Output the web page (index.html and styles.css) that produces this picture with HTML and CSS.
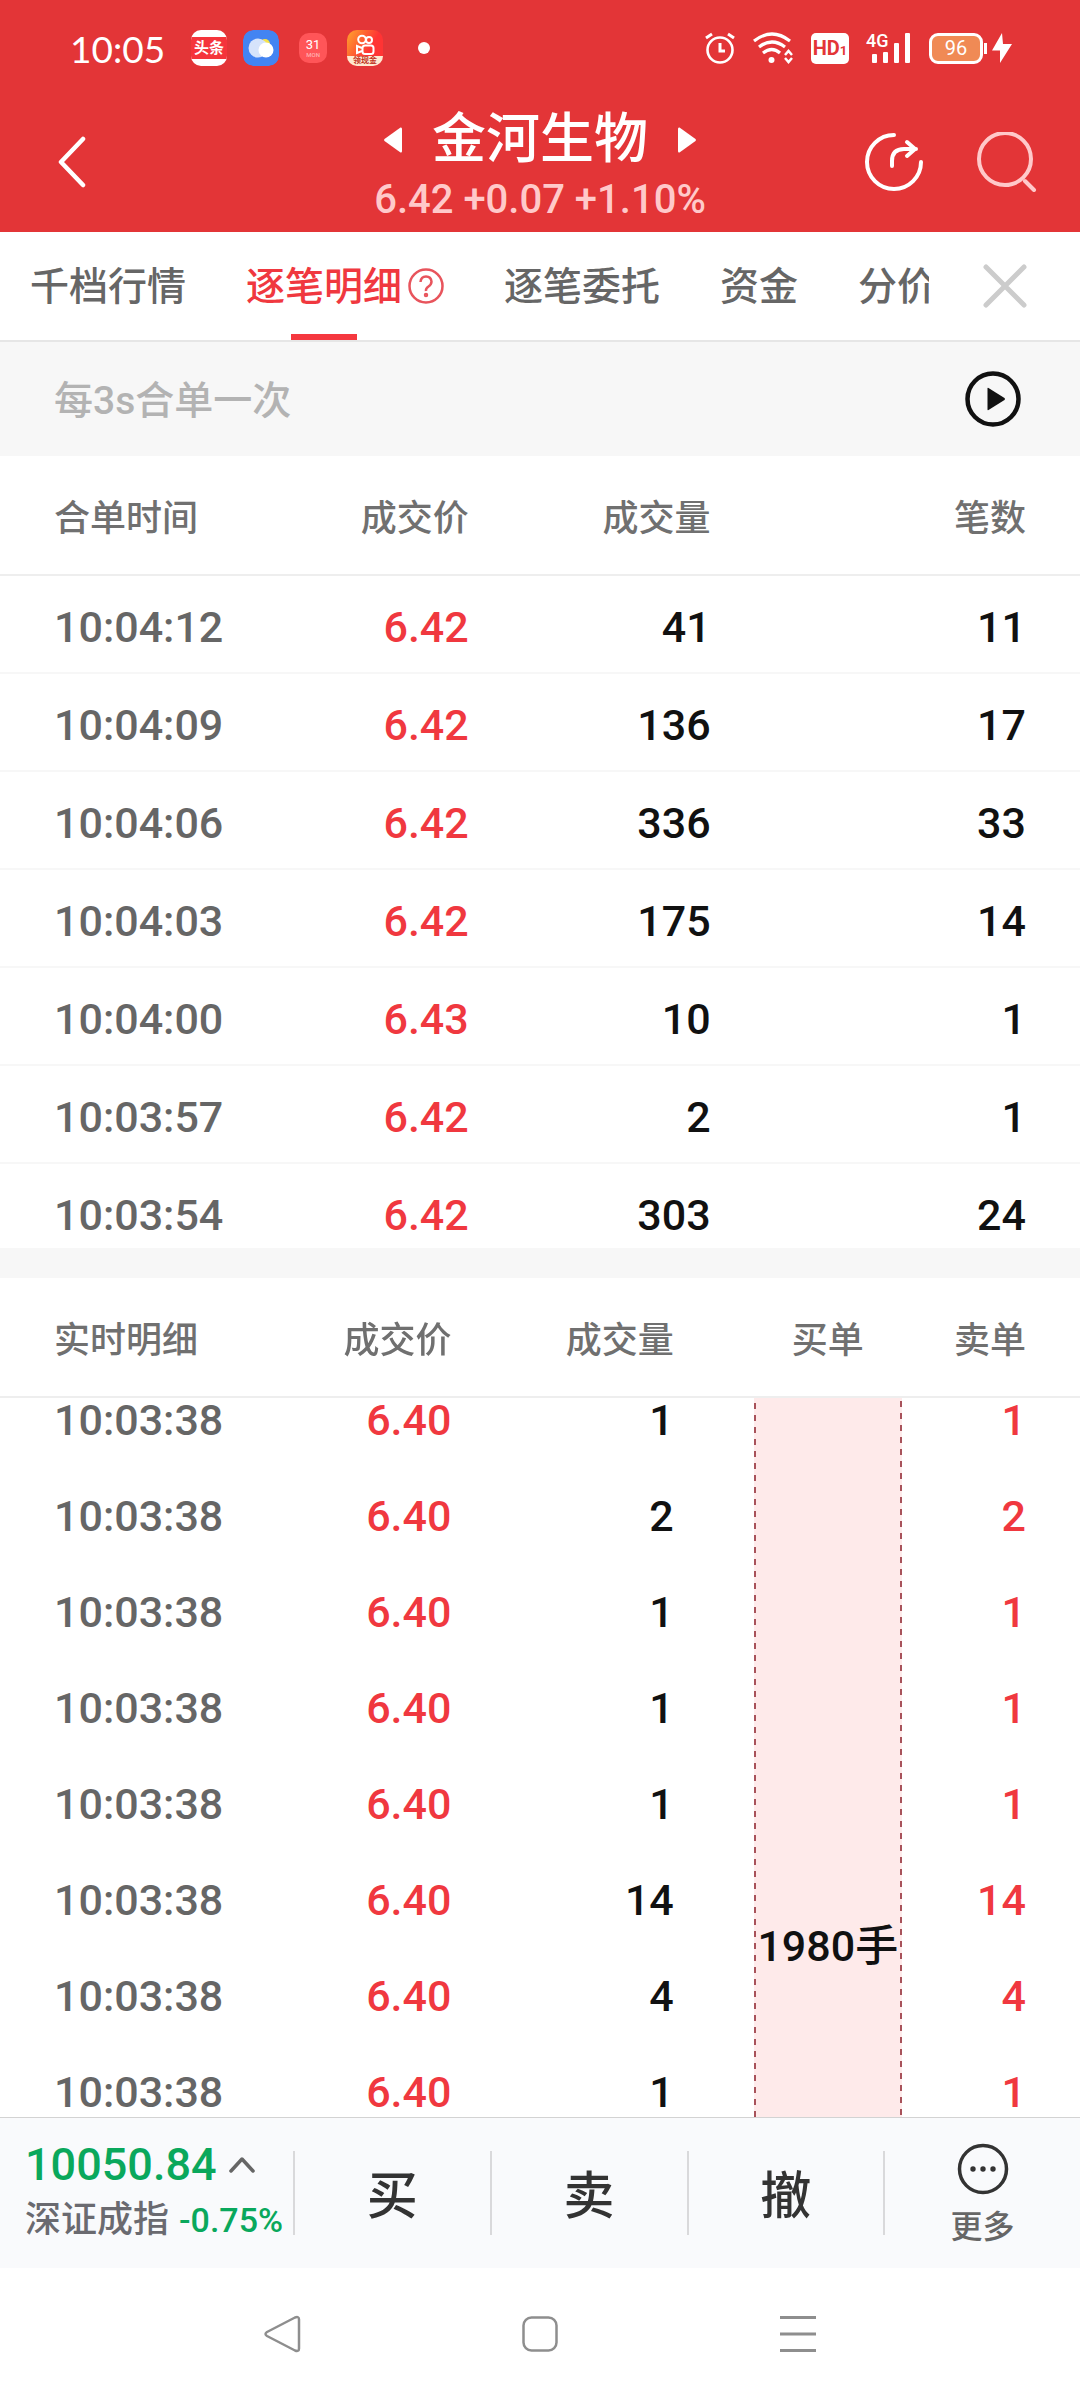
FILE: index.html
```html
<!DOCTYPE html>
<html lang="zh-CN">
<head>
<meta charset="utf-8">
<meta name="viewport" content="width=device-width, initial-scale=1">
<title>金河生物 逐笔明细</title>
<link rel="stylesheet" href="styles.css">
</head>
<body>
<header class="top">
  <div class="status">
    <div class="status-left">
      <span class="clock">10:05</span>
      <span class="app-icon toutiao"><span>头条</span></span>
      <svg class="app-icon" viewBox="0 0 36 36" aria-hidden="true"><rect width="36" height="36" rx="10" fill="#4384f2"/><circle cx="22" cy="14" r="5" fill="#f6e24a"/><circle cx="15" cy="18" r="9.500" fill="#d6e3fb"/><circle cx="23" cy="20" r="7.500" fill="#fff"/></svg>
      <span class="app-icon calendar"><b>31</b><small>MON</small></span>
      <span class="app-icon kuai">
        <svg viewBox="0 0 36 26" aria-hidden="true"><g fill="none" stroke="#fff" stroke-width="2"><circle cx="15" cy="9.500" r="3.800"/><circle cx="22" cy="10" r="3"/><rect x="15.500" y="15.500" width="11" height="8.500" rx="2.500"/><path d="M15 18l-5-2v7l5-2"/></g></svg>
        <small>领现金</small>
      </span>
      <span class="dot"></span>
    </div>
    <div class="status-right">
      <svg width="30" height="32" viewBox="0 0 30 32" fill="none" stroke="#fff" aria-hidden="true"><circle cx="15" cy="18" r="12.500" stroke-width="2.600"/><path d="M15 11v8h5" stroke-width="3"/><path d="M1 6l6-4M29 6l-6-4" stroke-width="3"/></svg>
      <svg width="42" height="32" viewBox="0 0 42 32" fill="none" stroke="#fff" aria-hidden="true"><path d="M2 9Q20-5 38 9M7 15q13-10 26 0M11 21q9-7 17 0" stroke-width="3.200"/><circle cx="19.500" cy="28" r="3" fill="#fff" stroke="none"/><path d="M33 23l3.500-4 3.500 4M33 26l3.500 4 3.500-4" stroke-width="2.500"/></svg>
      <span class="hd">HD<small>1</small></span>
      <span class="signal">
        <svg width="46" height="32" viewBox="0 0 46 32" fill="#fff" aria-hidden="true"><rect x="6" y="22" width="5" height="9" rx="1"/><rect x="17" y="20" width="5" height="11" rx="1"/><rect x="28" y="11" width="5" height="20" rx="1"/><rect x="39" y="1" width="5" height="30" rx="1"/></svg>
        <b>4G</b>
      </span>
      <span class="power"><span class="battery">96</span><i class="nub"></i><svg width="20" height="32" viewBox="0 0 20 32" fill="#fff" aria-hidden="true"><path d="M10 1L0 18.500h8V31L20 12h-9z"/></svg></span>
    </div>
  </div>
  <div class="titlebar">
    <button class="plain back" aria-label="返回"><svg width="30" height="52" viewBox="0 0 30 52" fill="none" stroke="#fff" stroke-width="4.500" stroke-linecap="round" stroke-linejoin="round"><path d="M27 3L5 26l22 23"/></svg></button>
    <div class="stock">
      <div class="stock-name">
        <button class="plain" aria-label="上一只"><svg width="20" height="28" viewBox="0 0 20 28" fill="#fff"><path d="M17.500 1.500Q19 1 19 3v22q0 2-1.500 1.500L1.500 15q-1-1 0-2z"/></svg></button>
        <h1>金河生物</h1>
        <button class="plain" aria-label="下一只"><svg width="20" height="28" viewBox="0 0 20 28" fill="#fff"><path d="M2.500 1.500Q1 1 1 3v22q0 2 1.500 1.500L18.500 15q1-1 0-2z"/></svg></button>
      </div>
      <p class="stock-quote">6.42 +0.07 +1.10%</p>
    </div>
    <div class="actions">
      <button class="plain" aria-label="分享"><svg width="60" height="60" viewBox="0 0 60 60" fill="none" stroke="#fff" stroke-width="4" stroke-linecap="round" stroke-linejoin="round"><path d="M31 3a27 27 0 1 0 27 27M29 34v-5q0-12 12-12h12M44 10l8 7-8 7"/></svg></button>
      <button class="plain" aria-label="搜索"><svg width="60" height="60" viewBox="0 0 60 60" fill="none" stroke="#ffc9ca" stroke-width="4" stroke-linecap="round"><circle cx="28" cy="27" r="26"/><path d="M48 49l9 9"/></svg></button>
    </div>
  </div>
</header>

<nav class="tabs">
  <div class="tab-list">
    <button class="plain tab">千档行情</button>
    <div class="tab-group">
      <button class="plain tab active">逐笔明细</button>
      <button class="plain help" aria-label="说明"><svg width="36" height="36" viewBox="0 0 36 36" fill="none" stroke="#e8545c" stroke-width="2.500"><circle cx="18" cy="18" r="16.500"/><path d="M12.500 14q.5-5.500 5.500-5.500t5.500 5q0 3-3 5T18 23"/><circle cx="18" cy="27" r="1" /></svg></button>
    </div>
    <button class="plain tab">逐笔委托</button>
    <button class="plain tab">资金</button>
    <button class="plain tab">分价</button>
  </div>
  <button class="plain close" aria-label="关闭"><svg width="44" height="44" viewBox="0 0 44 44" fill="none" stroke="#ccc" stroke-width="5" stroke-linecap="round"><path d="M3 3l38 38M41 3L3 41"/></svg></button>
</nav>

<main class="content">
  <div class="notice">
    <span>每3s合单一次</span>
    <button class="plain" aria-label="播放"><svg width="56" height="56" viewBox="0 0 56 56"><circle cx="28" cy="28" r="25.500" fill="none" stroke="#111" stroke-width="4.500"/><path d="M22.500 17.500q0-1 1-.5L39.500 27q1 1 0 2l-16 10q-1 .5-1-.5z" fill="#111"/></svg></button>
  </div>

  <section class="merged">
    <table class="trades">
      <colgroup><col class="m-time"><col class="m-price"><col class="m-volume"><col></colgroup>
      <thead><tr><th>合单时间</th><th>成交价</th><th>成交量</th><th>笔数</th></tr></thead>
      <tbody>
        <tr><td>10:04:12</td><td class="up">6.42</td><td>41</td><td>11</td></tr>
        <tr><td>10:04:09</td><td class="up">6.42</td><td>136</td><td>17</td></tr>
        <tr><td>10:04:06</td><td class="up">6.42</td><td>336</td><td>33</td></tr>
        <tr><td>10:04:03</td><td class="up">6.42</td><td>175</td><td>14</td></tr>
        <tr><td>10:04:00</td><td class="up">6.43</td><td>10</td><td>1</td></tr>
        <tr><td>10:03:57</td><td class="up">6.42</td><td>2</td><td>1</td></tr>
        <tr><td>10:03:54</td><td class="up">6.42</td><td>303</td><td>24</td></tr>
      </tbody>
    </table>
  </section>

  <section class="live" id="live">
    <table class="trades">
      <colgroup><col class="l-time"><col class="l-price"><col class="l-volume"><col class="l-buy"><col></colgroup>
      <thead><tr><th>实时明细</th><th>成交价</th><th class="volume">成交量</th><th class="buy">买单</th><th>卖单</th></tr></thead>
      <tbody>
        <tr><td>10:03:38</td><td class="up">6.40</td><td class="volume">1</td><td class="buy order" rowspan="8">1980手</td><td class="up">1</td></tr>
        <tr><td>10:03:38</td><td class="up">6.40</td><td class="volume">2</td><td class="up">2</td></tr>
        <tr><td>10:03:38</td><td class="up">6.40</td><td class="volume">1</td><td class="up">1</td></tr>
        <tr><td>10:03:38</td><td class="up">6.40</td><td class="volume">1</td><td class="up">1</td></tr>
        <tr><td>10:03:38</td><td class="up">6.40</td><td class="volume">1</td><td class="up">1</td></tr>
        <tr><td>10:03:38</td><td class="up">6.40</td><td class="volume">14</td><td class="up">14</td></tr>
        <tr><td>10:03:38</td><td class="up">6.40</td><td class="volume">4</td><td class="up">4</td></tr>
        <tr><td>10:03:38</td><td class="up">6.40</td><td class="volume">1</td><td class="up">1</td></tr>
      </tbody>
    </table>
  </section>
</main>

<footer class="toolbar">
  <button class="plain index">
    <span class="index-value">10050.84<svg width="26" height="18" viewBox="0 0 26 18" fill="none" stroke="#666" stroke-width="3.500" stroke-linecap="round" stroke-linejoin="round"><path d="M2 15L13 3l11 12"/></svg></span>
    <span class="index-name">深证成指<span class="index-change">-0.75%</span></span>
  </button>
  <button class="plain trade">买</button>
  <button class="plain trade">卖</button>
  <button class="plain trade">撤</button>
  <button class="plain more">
    <svg width="52" height="52" viewBox="0 0 52 52"><circle cx="26" cy="26" r="23.500" fill="none" stroke="#333" stroke-width="3.500"/><g fill="#333"><circle cx="16" cy="26" r="2.700"/><circle cx="26" cy="26" r="2.700"/><circle cx="36" cy="26" r="2.700"/></g></svg>
    更多
  </button>
</footer>

<nav class="system">
  <button class="plain" aria-label="后退"><svg width="40" height="40" viewBox="0 0 40 40" fill="none" stroke="#8e8e8e" stroke-width="2.500" stroke-linejoin="round"><path d="M33 3.500q4-1.500 4 2v29q0 3.500-4 2L5 22q-3-2 0-4z"/></svg></button>
  <button class="plain" aria-label="主页"><svg width="40" height="40" viewBox="0 0 40 40" fill="none" stroke="#8e8e8e" stroke-width="2.500"><rect x="3.500" y="3.500" width="33" height="33" rx="8"/></svg></button>
  <button class="plain" aria-label="最近任务"><svg width="40" height="40" viewBox="0 0 40 40" stroke="#8e8e8e" stroke-width="3"><path d="M2 3.500h36M2 20h36M2 36.500h36"/></svg></button>
</nav>
<script>
  document.getElementById('live').scrollTop = 28;
</script>
</body>
</html>
```
FILE: styles.css
```css
* {
  box-sizing: border-box;
}

body {
  display: flex;
  flex-direction: column;
  height: 100vh;
  margin: 0;
  background: #fff;
  color: #111;
  font-family: Roboto, "Noto Sans CJK SC", sans-serif;
  font-weight: 500;
}

svg {
  display: block;
  flex: none;
}

.plain {
  margin: 0;
  padding: 0;
  border: 0;
  background: none;
  color: inherit;
  font: inherit;
}

/* Red header */
.top {
  flex: none;
  background: #e33537;
  color: #fff;
}

.status {
  display: flex;
  align-items: center;
  justify-content: space-between;
  height: 96px;
  padding: 0 68px 0 70px;
}

.status-left,
.status-right {
  display: flex;
  align-items: center;
}

.status-left {
  gap: 16px;
}

.status-right {
  gap: 17px;
}

.clock {
  margin-right: 10px;
  font-family: Lato, sans-serif;
  font-size: 37px;
  font-weight: 400;
}

.app-icon {
  display: flex;
  flex: none;
  flex-direction: column;
  align-items: center;
  justify-content: center;
  width: 36px;
  height: 36px;
  border-radius: 10px;
  overflow: hidden;
}

.toutiao {
  background: #fff;
}

.toutiao span {
  width: 100%;
  background: #f5343b;
  font-size: 15px;
  font-weight: 700;
  line-height: 22px;
  text-align: center;
}

.calendar {
  width: 28px;
  height: 30px;
  margin: 0 4px;
  background: #ff5558;
}

.calendar b {
  font-size: 13px;
  font-weight: 400;
  line-height: 14px;
}

.calendar small {
  color: #ffb0b0;
  font-size: 6px;
  line-height: 6px;
}

.kuai {
  background: linear-gradient(120deg, #ffa52c, #ff3434 60%);
}

.kuai svg {
  width: 36px;
  height: 26px;
}

.kuai small {
  width: 100%;
  height: 10px;
  background: #ffe9d0;
  color: #c03020;
  font-size: 8px;
  font-weight: 700;
  line-height: 10px;
  text-align: center;
}

.dot {
  width: 12px;
  height: 12px;
  margin-left: 19px;
  border-radius: 50%;
  background: #fff;
}

.hd {
  width: 38px;
  height: 31px;
  border-radius: 5px;
  background: #fff;
  color: #e33537;
  font-size: 20px;
  font-weight: 700;
  line-height: 31px;
  text-align: center;
}

.hd small {
  font-size: 13px;
}

.signal {
  position: relative;
}

.signal b {
  position: absolute;
  top: 0;
  left: 0;
  font-size: 18px;
  font-weight: 500;
  line-height: 18px;
}

.power {
  display: flex;
  align-items: center;
}

.battery {
  width: 54px;
  height: 31px;
  border: 3px solid #fff;
  border-radius: 9px;
  background: #f08a55;
  font-size: 20px;
  font-weight: 400;
  line-height: 25px;
  text-align: center;
}

.nub {
  width: 3px;
  height: 11px;
  margin: 0 5px 0 1px;
  background: #fff;
}

.titlebar {
  display: grid;
  grid-template-columns: 1fr auto 1fr;
  align-items: center;
  height: 136px;
  padding: 0 43px 4px;
}

.back {
  justify-self: start;
  padding-left: 13px;
}

.stock {
  text-align: center;
}

.stock-name {
  display: flex;
  align-items: center;
  justify-content: center;
  gap: 29px;
}

h1 {
  margin: 0;
  font-size: 54px;
  font-weight: 500;
  line-height: 76px;
}

.stock-quote {
  margin: 0;
  color: #ffc9ca;
  font-size: 40px;
  line-height: 44px;
}

.actions {
  display: flex;
  justify-content: flex-end;
  gap: 54px;
}

/* Tab strip */
.tabs {
  display: flex;
  flex: none;
  height: 110px;
  border-bottom: 2px solid #e6e6e6;
  color: #666;
}

.tab-list {
  display: flex;
  flex: 1;
  gap: 60px;
  min-width: 0;
  padding-left: 30px;
  overflow: hidden;
}

.tab-group {
  display: flex;
  flex: none;
  gap: 6px;
}

.tab {
  position: relative;
  flex: none;
  padding-bottom: 6px;
  font-size: 39px;
}

.active {
  color: #f0383f;
}

.active::after {
  position: absolute;
  bottom: 0;
  left: 50%;
  width: 66px;
  height: 6px;
  margin-left: -33px;
  background: #f5383f;
  content: "";
}

.close {
  display: flex;
  flex: none;
  align-items: center;
  justify-content: center;
  width: 151px;
}

/* Trade lists */
.content {
  display: flex;
  flex: 1;
  flex-direction: column;
  min-height: 0;
}

.notice {
  display: flex;
  flex: none;
  align-items: center;
  justify-content: space-between;
  height: 114px;
  padding: 0 59px 0 54px;
  background: #f7f7f7;
  color: #b3b3b3;
  font-size: 39px;
}

.notice span {
  padding-bottom: 4px;
}

.merged {
  flex: none;
  height: 792px;
  overflow: hidden;
}

.live {
  flex: 1;
  min-height: 0;
  margin-top: 30px;
  overflow-y: auto;
  scrollbar-width: none;
  box-shadow: 0 -30px #f7f7f7;
}

.trades {
  width: 100%;
  border-spacing: 0;
  table-layout: fixed;
}

.m-time,
.l-time {
  width: 24%;
}

.m-price {
  width: 19.4%;
}

.m-volume {
  width: 22.4%;
}

.l-price {
  width: 17.8%;
}

.l-volume {
  width: 28%;
}

.l-buy {
  width: 13.7%;
}

.trades th,
.trades td {
  padding: 0;
  text-align: right;
}

.trades th {
  position: sticky;
  top: 0;
  z-index: 1;
  height: 120px;
  padding-top: 8px;
  border-bottom: 2px solid #eee;
  background: #fff;
  color: #707070;
  font-size: 36px;
  font-weight: 500;
  line-height: 48px;
}

.trades td {
  height: 96px;
  padding-top: 3px;
  font-size: 43px;
  line-height: 48px;
}

.merged td {
  height: 98px;
  padding-top: 6px;
  border-bottom: 2px solid #f7f7f7;
}

.trades th:first-child,
.trades td:first-child {
  padding-left: 54px;
  text-align: left;
}

.trades td:first-child {
  color: #666;
}

.trades th:last-child,
.trades td:last-child {
  padding-right: 54px;
}

.trades .up {
  color: #f0383f;
}

.trades .volume {
  padding-right: 80px;
}

.trades .buy {
  text-align: center;
}

.trades .order {
  padding-top: 552px;
  background:
    linear-gradient(#a8525a 50%, transparent 50%) left 9px / 2px 12px repeat-y,
    linear-gradient(#a8525a 50%, transparent 50%) right 7px / 2px 12px repeat-y,
    #feeaea;
  vertical-align: top;
  white-space: nowrap;
}

/* Bottom toolbar */
.toolbar {
  display: grid;
  flex: none;
  grid-template-columns: 293px 1fr 1fr 1fr 1fr;
  align-items: center;
  height: 151px;
  border-top: 1px solid #d3d3d3;
  background: #f9fafc;
}

.index {
  padding-left: 25px;
  text-align: left;
}

.index-value {
  display: flex;
  align-items: center;
  gap: 12px;
  color: #0aa85c;
  font-size: 45px;
  line-height: 54px;
}

.index-name {
  display: flex;
  align-items: center;
  gap: 10px;
  color: #6a6a70;
  font-size: 36px;
  line-height: 56px;
  white-space: nowrap;
}

.index-change {
  color: #0aa85c;
  font-size: 34px;
}

.trade,
.more {
  height: 84px;
  border-left: 2px solid #d9d9db;
  color: #333;
}

.trade {
  padding-top: 8px;
  font-size: 51px;
  line-height: 76px;
}

.more {
  display: flex;
  flex-direction: column;
  align-items: center;
  justify-content: center;
  gap: 10px;
  padding-top: 6px;
  color: #666;
  font-size: 32px;
  line-height: 44px;
}

/* System navigation */
.system {
  display: flex;
  flex: none;
  align-items: center;
  justify-content: center;
  gap: 218px;
  height: 132px;
}
```
